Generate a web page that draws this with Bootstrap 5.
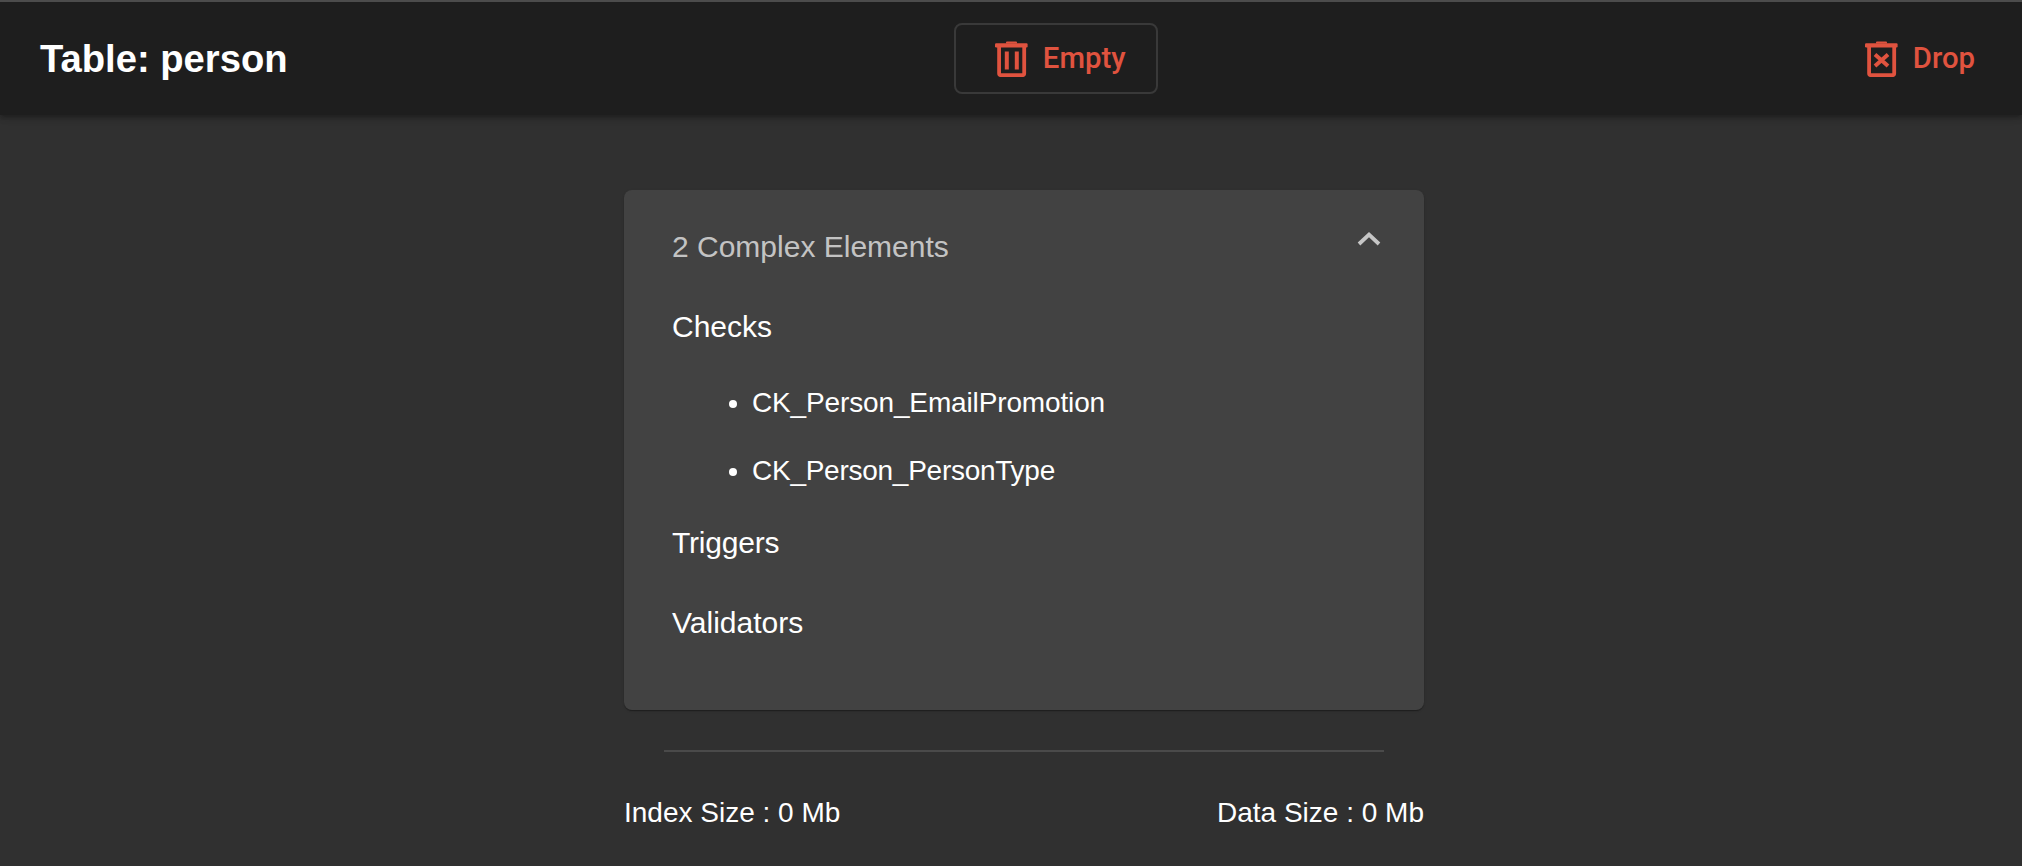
<!DOCTYPE html>
<html lang="en">
<head>
<meta charset="utf-8">
<title>Table: person</title>
<link href="https://cdn.jsdelivr.net/npm/bootstrap@5.3.0/dist/css/bootstrap.min.css" rel="stylesheet">
<style>
html, body { height: 100%; }
body { background: #303030; color: #fff; font-family: "Liberation Sans", Arial, sans-serif; font-size: 28px; line-height: 32px; overflow: hidden; }
.top-bar { height: 115px; background: #1e1e1e; border-top: 2px solid #4c4c4c; padding: 0 15px 0 40px; box-shadow: 0 2px 4px -1px rgba(0,0,0,.2), 0 4px 5px 0 rgba(0,0,0,.14), 0 1px 10px 0 rgba(0,0,0,.12); }
.page-title { font-size: 38.2px; font-weight: 700; line-height: 44px; margin: 0; color: #fff; }
.act-btn { height: 71px; display: inline-flex; align-items: center; gap: 15px; padding: 0 30px 0 39px; font-family: Roboto, sans-serif; font-weight: 500; font-size: 29.3px; color: #e0533f; background: transparent; border: 2px solid transparent; border-radius: 8px; }
.act-btn:hover, .act-btn:active { color: #e0533f; }
.act-outline { border-color: #393939; }
.act-btn svg { width: 33px; height: 36px; flex: none; }
.main-col { width: 800px; margin: 75px 0 0 624px; }
.info-card { background: #424242; color: #fff; border: 0; border-radius: 8px; padding: 41px 48px 71px; height: 520px; box-shadow: 0 2px 1px -1px rgba(0,0,0,.2), 0 1px 1px 0 rgba(0,0,0,.14), 0 1px 3px 0 rgba(0,0,0,.12); }
.info-head { color: rgba(255,255,255,.7); font-size: 30px; }
.chev { width: 30px; height: 20px; margin-right: -8px; margin-top: -18px; }
.grp-a { margin-top: 48px; font-size: 30px; }
.grp-b { margin-top: 40px; font-size: 30px; letter-spacing: -.2px; }
.chk-list { margin: 44px 0 0; padding-left: 80px; letter-spacing: -.14px; }
.chk-list li + li { margin-top: 36px; letter-spacing: -.26px; }
.rule-line { width: 720px; height: 2px; margin: 40px auto 0; background: #4a4a4a; border: 0; opacity: 1; }
.size-row { margin-top: 45px; }
</style>
</head>
<body>
<header class="top-bar d-flex justify-content-between align-items-center">
  <h1 class="page-title">Table: person</h1>
  <button type="button" class="btn act-btn act-outline">
    <svg viewBox="0 0 33 36" fill="none" aria-hidden="true">
      <path d="M12 0.4h9a1 1 0 0 1 1 1V2.5H11V1.4a1 1 0 0 1 1-1z" fill="currentColor"/>
      <rect x="0" y="2.3" width="32.6" height="4.2" rx="1.2" fill="currentColor"/>
      <path d="M4.1 5v27.2a2 2 0 0 0 2 2h21.1a2 2 0 0 0 2-2V5" stroke="currentColor" stroke-width="3.8"/>
      <rect x="9.8" y="10.5" width="4" height="18" fill="currentColor"/>
      <rect x="19.8" y="10.5" width="4" height="18" fill="currentColor"/>
    </svg>
    <span>Empty</span>
  </button>
  <button type="button" class="btn act-btn">
    <svg viewBox="0 0 33 36" fill="none" aria-hidden="true">
      <path d="M12 0.4h9a1 1 0 0 1 1 1V2.5H11V1.4a1 1 0 0 1 1-1z" fill="currentColor"/>
      <rect x="0" y="2.3" width="32.6" height="4.2" rx="1.2" fill="currentColor"/>
      <path d="M4.1 5v27.2a2 2 0 0 0 2 2h21.1a2 2 0 0 0 2-2V5" stroke="currentColor" stroke-width="3.8"/>
      <path d="M10 13.5l13 11.4M23 13.5L10 24.9" stroke="currentColor" stroke-width="4"/>
    </svg>
    <span>Drop</span>
  </button>
</header>
<main class="main-col">
  <section class="card info-card">
    <div class="d-flex justify-content-between align-items-center info-head">
      <span>2 Complex Elements</span>
      <svg class="chev" viewBox="0 0 30 20" fill="none" aria-hidden="true"><path d="M5 16L15 6.5 25 16" stroke="currentColor" stroke-width="3.8"/></svg>
    </div>
    <div class="grp-a">Checks</div>
    <ul class="chk-list">
      <li>CK_Person_EmailPromotion</li>
      <li>CK_Person_PersonType</li>
    </ul>
    <div class="grp-b">Triggers</div>
    <div class="grp-a">Validators</div>
  </section>
  <hr class="rule-line">
  <div class="d-flex justify-content-between size-row">
    <span>Index Size : 0 Mb</span>
    <span>Data Size : 0 Mb</span>
  </div>
</main>
<script src="https://cdn.jsdelivr.net/npm/bootstrap@5.3.0/dist/js/bootstrap.bundle.min.js"></script>
</body>
</html>
